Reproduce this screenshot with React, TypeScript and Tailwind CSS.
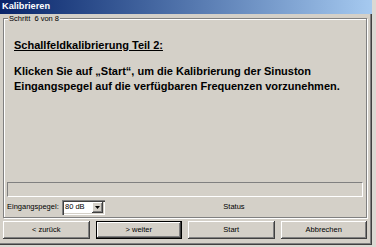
export default function App() {
  const btn =
    "h-[18px] flex items-center justify-center bg-[#d4d0c8] text-[7.5px] text-black shadow-[inset_-1px_-1px_#404040,inset_1px_1px_#ffffff,inset_-2px_-2px_#808080]";

  return (
    <div
      className="w-[376px] h-[247px] bg-[#dcd9d3] overflow-hidden"
      style={{ fontFamily: '"Liberation Sans", Arial, sans-serif' }}
    >
      <div className="w-[372px] h-[245px] bg-[#d4d0c8] flex flex-col shadow-[inset_-1px_-1px_#404040,inset_-2px_-2px_#808080]">
        {/* title bar */}
        <div className="h-[14px] flex items-center pl-[2px] bg-gradient-to-r from-[#0a246a] to-[#a6caf0]">
          <span className="text-white font-bold text-[9.2px] leading-none">Kalibrieren</span>
        </div>

        <div className="flex flex-col px-[3px] pr-[5px]">
          <fieldset className="border border-[#808080] px-[3px] pb-[2px] shadow-[inset_1px_1px_0_#ffffff,1px_1px_0_#ffffff]">
            <legend className="ml-[1px] px-[1px] bg-[#d4d0c8] text-[7.5px] leading-[9px] text-black">
              Schritt&nbsp;&nbsp;6 von 8
            </legend>

            <div className="h-[192px] flex flex-col">
              <div className="pl-[7px] mt-[15px] text-black">
                <h1 className="text-[11px] leading-[15px] font-bold underline">
                  Schallfeldkalibrierung Teil 2:
                </h1>
                <p className="mt-[11px] text-[11px] leading-[15px] font-bold">
                  Klicken Sie auf „Start“, um die Kalibrierung der Sinuston
                  <br />
                  Eingangspegel auf die verfügbaren Frequenzen vorzunehmen.
                </p>
              </div>

              <div className="flex-1" />

              {/* progress bar */}
              <div className="h-[15px] border-t border-l border-[#808080] border-b border-r border-b-white border-r-white" />

              <div className="mt-[2px] h-[16px] flex items-center text-[7.5px] text-black">
                <span className="w-[55px]">Eingangspegel:</span>
                <div className="w-[43px] h-[15px] bg-white flex items-center shadow-[inset_1px_1px_#808080,inset_2px_2px_#404040,inset_-1px_-1px_#ffffff,inset_-2px_-2px_#d4d0c8]">
                  <span className="flex-1 pl-[3px]">80 dB</span>
                  <div className="w-[11px] h-[11px] mr-[2px] bg-[#d4d0c8] flex items-center justify-center shadow-[inset_-1px_-1px_#404040,inset_1px_1px_#ffffff,inset_-2px_-2px_#808080]">
                    <svg width="5" height="3" viewBox="0 0 5 3">
                      <path d="M0 0h5L2.5 3z" fill="#000" />
                    </svg>
                  </div>
                </div>
                <span className="flex-1 text-center">Status</span>
              </div>
            </div>
          </fieldset>

          <div className="mt-[3px] grid grid-cols-4 gap-[6px]">
            <button className={btn}>&lt; zurück</button>
            <button className="h-[18px] flex items-center justify-center bg-[#d4d0c8] text-[7.5px] text-black border border-black shadow-[inset_-1px_-1px_#404040,inset_1px_1px_#ffffff,inset_-2px_-2px_#808080]">
              &gt; weiter
            </button>
            <button className={btn}>Start</button>
            <button className={btn}>Abbrechen</button>
          </div>
        </div>
      </div>
    </div>
  );
}
